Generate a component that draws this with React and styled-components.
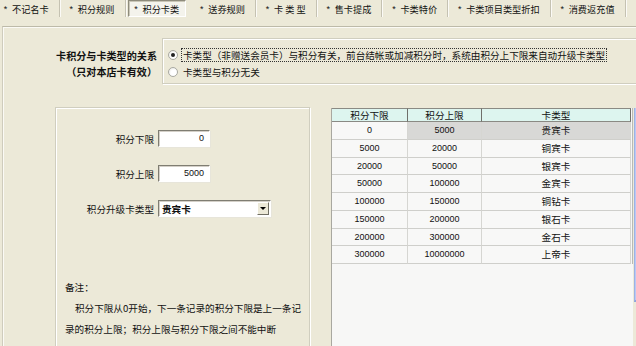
import React from "react";
import styled, { createGlobalStyle, css } from "styled-components";

const GlobalStyle = createGlobalStyle`
  html, body {
    margin: 0;
    padding: 0;
  }
  body {
    background: #ece9d8;
    font-family: "Noto Sans CJK SC", "Liberation Sans", sans-serif;
    font-size: 9.6px;
    color: #111;
  }
`;

const Window = styled.div`
  width: 636px;
  height: 346px;
  overflow: hidden;
  background: #ece9d8;
  display: flex;
  flex-direction: column;
`;

// Tabs
const TabStrip = styled.div`
  display: flex;
  height: 17px;
  flex-shrink: 0;
  margin-bottom: 9px;
`;

const Tab = styled.div`
  display: flex;
  align-items: center;
  gap: 4px;
  height: 17px;
  box-sizing: border-box;
  padding: 0 10px 0 ${(p) => p.$pl ?? 9}px;
  font-size: 9.2px;
  white-space: nowrap;
  border-right: 1px solid #c5c2b2;
  box-shadow: 1px 0 0 #fbfaf6;

  ${(p) =>
    p.$active &&
    css`
      margin: 0 3px 0 2px;
      padding: 0 6px 0 5px;
      background: #f4f3ec;
      border: 1px solid #8e8b7c;
      border-right-color: #fff;
      border-bottom-color: #fff;
      box-shadow: inset 1px 1px 0 #c9c6b7;
    `}
`;

const Star = styled.span`
  font-family: "Liberation Sans", sans-serif;
  font-size: 9px;
  width: 5px;
  text-align: center;
`;

// Panel
const Panel = styled.div`
  flex: 1;
  min-height: 0;
  margin-left: 2px;
  border-top: 1px solid #bdbaa9;
  border-left: 1px solid #cfccbd;
  box-shadow: inset 1px 1px 0 #fbfaf5;
  display: flex;
  flex-direction: column;
`;

const RelationRow = styled.div`
  display: flex;
  margin-top: 11px;
`;

const RelationLabel = styled.div`
  width: 154px;
  flex-shrink: 0;
  margin-top: 10px;
  margin-right: 5px;
  text-align: right;
  font-weight: bold;
  font-size: 10.1px;
  line-height: 16px;
`;

const EtchedBox = css`
  box-sizing: border-box;
  border: 1px solid #d0cebf;
  box-shadow: inset 1px 1px 0 #fff, 1px 1px 0 #fff;
`;

const RadioBox = styled.div`
  ${EtchedBox};
  flex: 1;
  margin-right: -10px;
  height: 46px;
  padding: 7px 0 0 5px;
  display: flex;
  flex-direction: column;
`;

const RadioOption = styled.label`
  display: flex;
  align-items: center;
  gap: 3px;
  height: 17px;
  white-space: nowrap;
`;

const RadioDot = styled.span`
  width: 10px;
  height: 10px;
  box-sizing: border-box;
  border-radius: 50%;
  border: 1px solid #a9a9a2;
  background: radial-gradient(circle at 60% 60%, #ffffff 40%, #e3e2dc 100%);
  display: flex;
  align-items: center;
  justify-content: center;
  flex-shrink: 0;

  &::after {
    content: "";
    width: 4px;
    height: 4px;
    border-radius: 50%;
    background: ${(p) => (p.$checked ? "#222" : "transparent")};
  }
`;

const RadioText = styled.span`
  padding: 0 1px;
  line-height: 12px;
  border: 1px dotted ${(p) => (p.$focused ? "#333" : "transparent")};
`;

const Body = styled.div`
  flex: 1;
  display: flex;
  margin-top: 23px;
  margin-bottom: -12px;
`;

// Left form box
const FormBox = styled.div`
  ${EtchedBox};
  flex-shrink: 0;
  width: 255px;
  margin-left: 52px;
  padding: 22px 0 0 9px;
  display: flex;
  flex-direction: column;
`;

const FieldGrid = styled.div`
  display: grid;
  grid-template-columns: 89px auto;
  column-gap: 4px;
  row-gap: 18px;
  align-items: center;
`;

const FieldLabel = styled.div`
  text-align: right;
  white-space: nowrap;
`;

const Sunken = css`
  box-sizing: border-box;
  height: 17px;
  background: #fff;
  border: 1px solid #7f7d72;
  border-right-color: #fff;
  border-bottom-color: #fff;
  box-shadow: inset 1px 1px 0 #d4d0c8, 1px 1px 0 #e7e5da;
`;

const NumberInput = styled.div`
  ${Sunken};
  width: 52px;
  padding-right: 5px;
  text-align: right;
  font-family: "Liberation Sans", sans-serif;
  font-size: 9px;
  line-height: 15px;
`;

const Select = styled.div`
  ${Sunken};
  width: 113px;
  display: flex;
  align-items: center;
  justify-content: space-between;
  padding: 0 1px 0 3px;
  font-weight: bold;
`;

const DropButton = styled.span`
  width: 12px;
  height: 13px;
  box-sizing: border-box;
  background: #ece9d8;
  border: 1px solid #fff;
  border-right-color: #716f64;
  border-bottom-color: #716f64;
  display: flex;
  align-items: center;
  justify-content: center;

  &::after {
    content: "";
    border-left: 3px solid transparent;
    border-right: 3px solid transparent;
    border-top: 3px solid #000;
  }
`;

const Notes = styled.div`
  margin-top: 60px;
  line-height: 21px;
  white-space: nowrap;
`;

const NoteIndent = styled.span`
  padding-left: 10px;
`;

// Table
const TableArea = styled.div`
  flex: 1;
  min-width: 0;
  display: flex;
  margin-left: 21px;
  margin-top: 1px;
`;

const TableFrame = styled.div`
  width: 301px;
  flex-shrink: 0;
  background: #f7f7f6;
  border-left: 1px solid #a9a8a0;
`;

const Grid = styled.div`
  display: grid;
  grid-template-columns: 76px 74px 149px;
  width: 300px;
  border-right: 1px solid #b9b9b4;
`;

const HeaderCell = styled.div`
  height: 14px;
  box-sizing: border-box;
  background: #ddf5ef;
  border-top: 1px solid #8a8a84;
  border-bottom: 1px solid #8a8a84;
  border-right: 1px solid #6f6f6a;
  text-align: center;
  line-height: 12px;
  &:last-child {
    border-right: none;
  }
`;

const Cell = styled.div`
  height: 17.75px;
  box-sizing: border-box;
  border-bottom: 1px solid #cfcfcb;
  border-right: 1px solid #d6d6d2;
  background: ${(p) => (p.$selected ? "#d8d8d6" : "#f8f8f7")};
  text-align: center;
  line-height: 16px;
  font-family: ${(p) =>
    p.$num ? `"Liberation Sans", sans-serif` : `"Noto Sans CJK SC", sans-serif`};
  font-size: ${(p) => (p.$num ? "9px" : "9.6px")};
`;

const ScrollBar = styled.div`
  flex-shrink: 0;
  margin-left: 1px;
  width: 4px;
  height: 192px;
  background: linear-gradient(90deg, #b4c6f3, #cfdcfb);
  border-left: 1px solid #9db1e4;
  border-bottom: 2px solid #8ea4da;
`;

const tabs = [
  { label: "不记名卡", pl: 3 },
  { label: "积分规则" },
  { label: "积分卡类", active: true },
  { label: "送券规则", pl: 10 },
  { label: "卡 类 型" },
  { label: "售卡提成" },
  { label: "卡类特价" },
  { label: "卡类项目类型折扣" },
  { label: "消费返充值" },
];

const rows = [
  ["0", "5000", "贵宾卡"],
  ["5000", "20000", "铜宾卡"],
  ["20000", "50000", "银宾卡"],
  ["50000", "100000", "金宾卡"],
  ["100000", "150000", "铜钻卡"],
  ["150000", "200000", "银石卡"],
  ["200000", "300000", "金石卡"],
  ["300000", "10000000", "上帝卡"],
];

function App() {
  return (
    <Window>
      <GlobalStyle />
      <TabStrip>
        {tabs.map((t) => (
          <Tab key={t.label} $active={t.active} $pl={t.pl}>
            <Star>*</Star>
            {t.label}
          </Tab>
        ))}
      </TabStrip>

      <Panel>
        <RelationRow>
          <RelationLabel>
            卡积分与卡类型的关系
            <br />
            （只对本店卡有效）
          </RelationLabel>
          <RadioBox>
            <RadioOption>
              <RadioDot $checked />
              <RadioText $focused>
                卡类型（非赠送会员卡）与积分有关，前台结帐或加减积分时，系统由积分上下限来自动升级卡类型
              </RadioText>
            </RadioOption>
            <RadioOption>
              <RadioDot />
              <RadioText>卡类型与积分无关</RadioText>
            </RadioOption>
          </RadioBox>
        </RelationRow>

        <Body>
          <FormBox>
            <FieldGrid>
              <FieldLabel>积分下限</FieldLabel>
              <NumberInput>0</NumberInput>
              <FieldLabel>积分上限</FieldLabel>
              <NumberInput>5000</NumberInput>
              <FieldLabel>积分升级卡类型</FieldLabel>
              <Select>
                贵宾卡
                <DropButton />
              </Select>
            </FieldGrid>
            <Notes>
              备注：
              <br />
              <NoteIndent>积分下限从0开始，下一条记录的积分下限是上一条记</NoteIndent>
              <br />
              录的积分上限；积分上限与积分下限之间不能中断
            </Notes>
          </FormBox>

          <TableArea>
            <TableFrame>
              <Grid>
                <HeaderCell>积分下限</HeaderCell>
                <HeaderCell>积分上限</HeaderCell>
                <HeaderCell>卡类型</HeaderCell>
                {rows.map((r, i) => (
                  <React.Fragment key={r[0]}>
                    <Cell $num>{r[0]}</Cell>
                    <Cell $num $selected={i === 0}>
                      {r[1]}
                    </Cell>
                    <Cell $selected={i === 0}>{r[2]}</Cell>
                  </React.Fragment>
                ))}
              </Grid>
            </TableFrame>
            <ScrollBar />
          </TableArea>
        </Body>
      </Panel>
    </Window>
  );
}

export default App;
